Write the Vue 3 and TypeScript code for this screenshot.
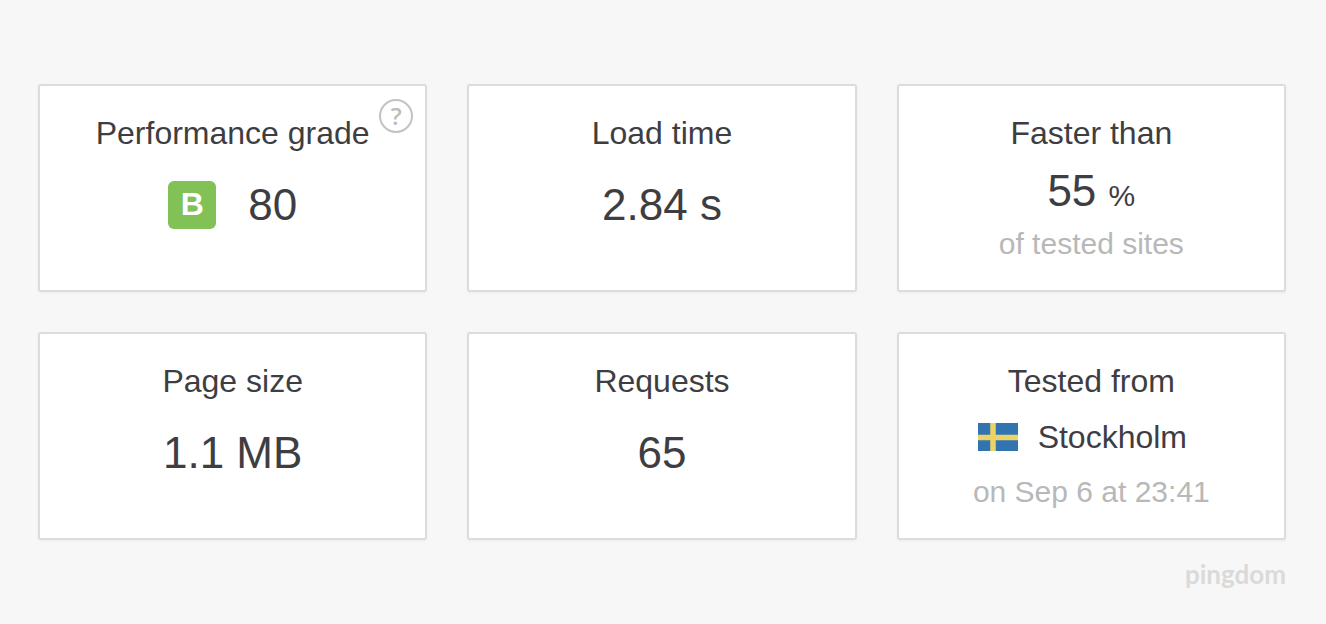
<script setup lang="ts">
interface Metric {
  title: string
  value: string
  unit?: string
  grade?: string
  help?: boolean
  flag?: boolean
  note?: string
}

const metrics: Metric[] = [
  { title: 'Performance grade', value: '80', grade: 'B', help: true },
  { title: 'Load time', value: '2.84 s' },
  { title: 'Faster than', value: '55', unit: '%', note: 'of tested sites' },
  { title: 'Page size', value: '1.1 MB' },
  { title: 'Requests', value: '65' },
  { title: 'Tested from', value: 'Stockholm', flag: true, note: 'on Sep 6 at 23:41' },
]
</script>

<template>
  <main class="summary">
    <section class="grid">
      <article v-for="m in metrics" :key="m.title" class="card">
        <h2 class="title">{{ m.title }}</h2>
        <div v-if="m.flag" class="place">
          <svg class="flag" viewBox="0 0 40 28" role="img" aria-label="Sweden">
            <rect width="40" height="28" fill="#3274b0" />
            <path d="M15 0V28M0 14.5H40" stroke="#ecd365" stroke-width="5.5" fill="none" />
          </svg>
          <span>{{ m.value }}</span>
        </div>
        <div v-else class="value" :class="{ compact: m.note }">
          <span v-if="m.grade" class="grade">{{ m.grade }}</span>
          <span>{{ m.value }}<span v-if="m.unit">&nbsp;<small class="unit">{{ m.unit }}</small></span></span>
        </div>
        <p v-if="m.note" class="note">{{ m.note }}</p>
        <button v-if="m.help" class="help" type="button" aria-label="About the performance grade">?</button>
      </article>
    </section>
    <footer class="brand">pingdom</footer>
  </main>
</template>

<style>
body {
  margin: 0;
  background: #f7f7f7;
}
</style>

<style scoped>
.summary {
  padding: 84px 40px 32px 38px;
  font-family: "Liberation Sans", Arial, sans-serif;
  color: #3e3e42;
}
.grid {
  display: grid;
  grid-template-columns: repeat(3, minmax(0, 1fr));
  gap: 40px;
}
.card {
  position: relative;
  box-sizing: border-box;
  padding: 28px 0;
  border: 2px solid #dcdcdc;
  border-radius: 3px;
  background: #fff;
  box-shadow: 0 1px 3px rgba(0, 0, 0, 0.05);
  text-align: center;
}
.title {
  margin: 0;
  font-size: 32px;
  font-weight: 400;
  line-height: 38px;
}
.value {
  display: flex;
  align-items: center;
  justify-content: center;
  gap: 32px;
  margin-top: 28px;
  font-size: 44px;
  line-height: 50px;
}
.value.compact {
  margin-top: 14px;
}
.unit {
  font-size: 30px;
  line-height: 30px;
}
.grade {
  width: 48px;
  height: 48px;
  border-radius: 6px;
  background: #82c155;
  color: #fff;
  font-size: 32px;
  font-weight: 700;
  line-height: 46px;
}
.place {
  display: flex;
  align-items: center;
  justify-content: center;
  gap: 20px;
  margin: 14px 0;
  padding-right: 18px;
  font-size: 32px;
  line-height: 46px;
}
.flag {
  width: 40px;
  height: 28px;
}
.note {
  margin: 10px 0 0;
  color: #b8b8b8;
  font-size: 30px;
  line-height: 36px;
}
.help {
  position: absolute;
  top: 13px;
  right: 12px;
  width: 34px;
  height: 34px;
  padding: 0;
  border: 2px solid #c2c2c2;
  border-radius: 50%;
  background: none;
  color: #bcbcbc;
  font-family: "Open Sans", sans-serif;
  font-size: 24px;
  font-weight: 600;
  line-height: 30px;
}
.brand {
  margin-top: 16px;
  color: #dadada;
  font-family: Lato, sans-serif;
  font-size: 26px;
  font-weight: 700;
  line-height: 36px;
  text-align: right;
}
</style>
